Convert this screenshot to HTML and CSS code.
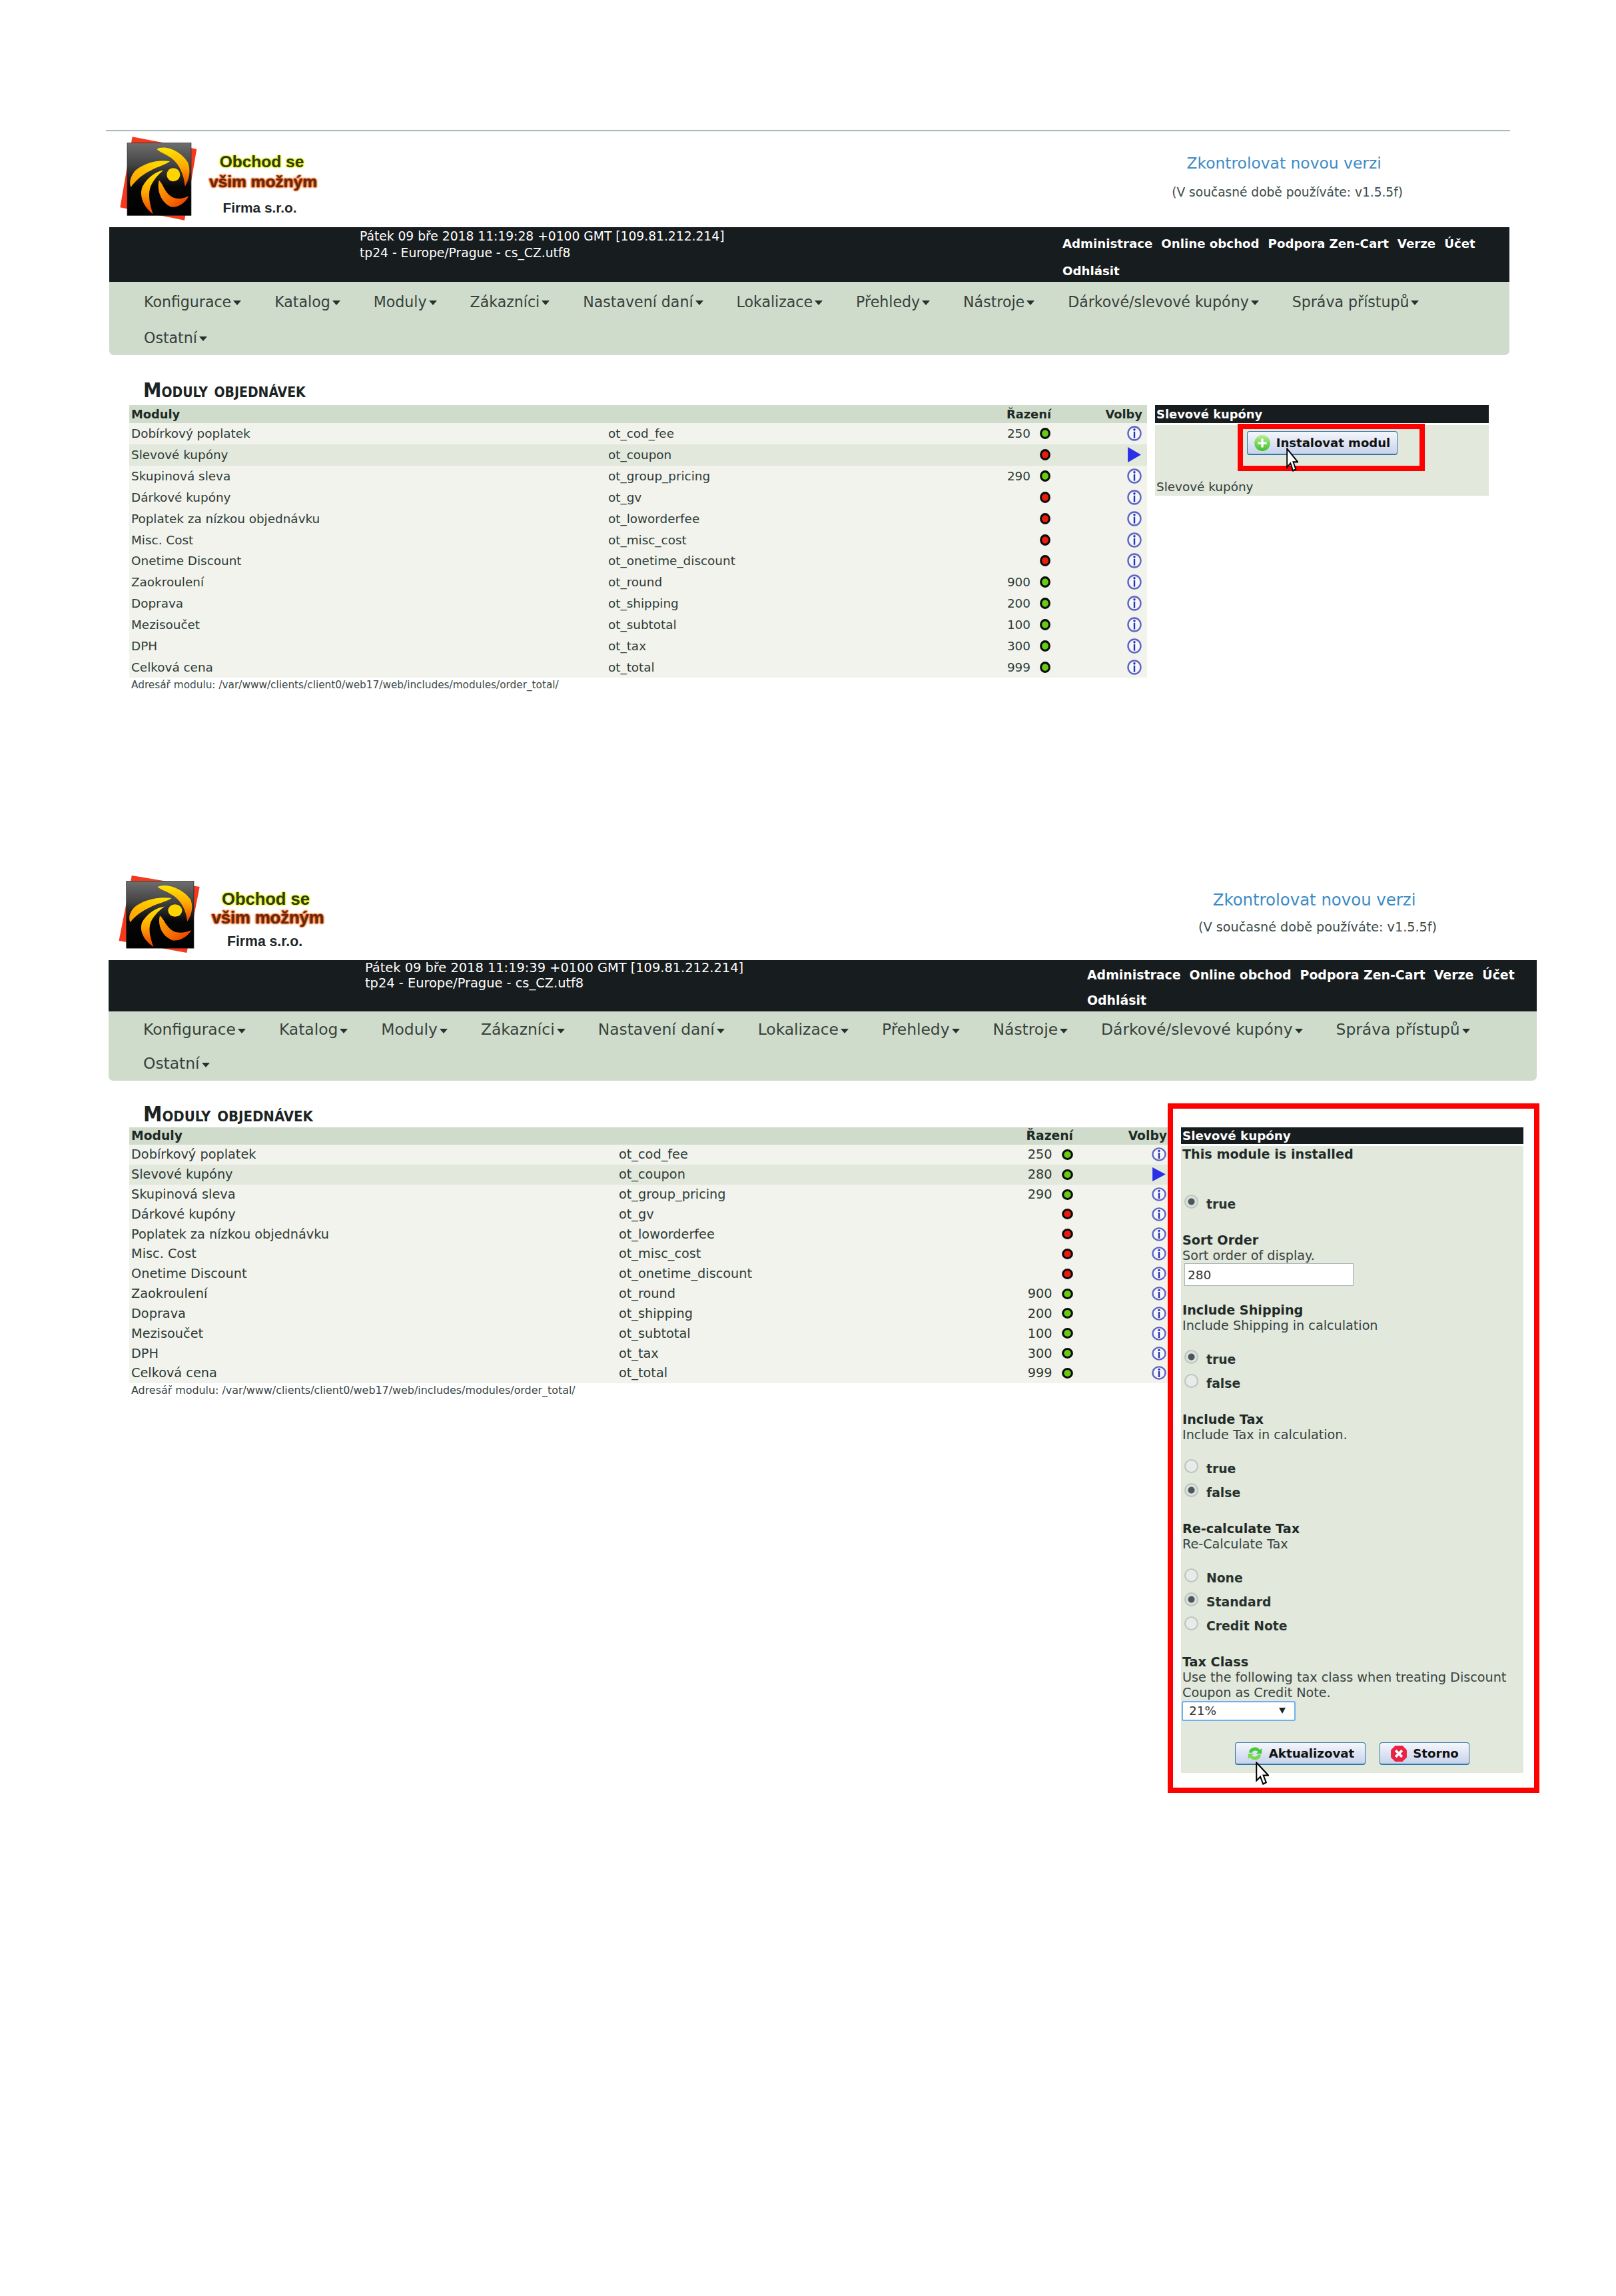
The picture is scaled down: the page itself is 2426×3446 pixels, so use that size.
FILE: index.html
```html
<!DOCTYPE html>
<html lang="cs">
<head>
<meta charset="utf-8">
<title>Moduly objednávek</title>
<link rel="stylesheet" href="styles.css">
</head>
<body>
<svg class="sprite" aria-hidden="true">
  <defs>
    <linearGradient id="gBlade" x1="0" y1="0" x2="0" y2="1"><stop offset="0" stop-color="#ffe600"/><stop offset=".5" stop-color="#ffa800"/><stop offset="1" stop-color="#ee3d00"/></linearGradient>
    <linearGradient id="gWing" x1="1" y1="0" x2="0" y2="1"><stop offset="0" stop-color="#ffe600"/><stop offset="1" stop-color="#ff9a00"/></linearGradient>
    <linearGradient id="gTail" x1="0" y1="0" x2="1" y2="1"><stop offset="0" stop-color="#ffb000"/><stop offset=".6" stop-color="#f56a00"/><stop offset="1" stop-color="#e83000"/></linearGradient>
    <linearGradient id="gBlock" x1="0" y1="0" x2="0" y2="1"><stop offset="0" stop-color="#6e6e6e"/><stop offset=".3" stop-color="#444"/><stop offset=".6" stop-color="#060606"/><stop offset="1" stop-color="#000"/></linearGradient>
    <linearGradient id="gGreen" x1="0" y1="0" x2="0" y2="1"><stop offset="0" stop-color="#b6ee90"/><stop offset="1" stop-color="#3fc12c"/></linearGradient>
    <symbol id="logo" viewBox="20 35 370 395" preserveAspectRatio="none">
      <polygon points="85,45 375,100 320,420 30,362" fill="#f4391c"/>
      <rect x="62" y="72" width="288" height="326" fill="url(#gBlock)" stroke="#222" stroke-width="2"/>
      <path d="M195 100C230 80 300 105 335 160C350 195 340 240 322 268C318 220 300 170 260 140C235 122 210 115 195 100Z" fill="url(#gBlade)"/>
      <path d="M255 155C200 145 130 165 95 200C75 225 70 250 78 272C100 240 130 215 170 195C200 180 235 170 255 155Z" fill="url(#gWing)"/>
      <path d="M225 195C190 200 150 230 130 270C115 310 135 360 178 392C165 350 155 310 165 275C175 245 200 215 225 195Z" fill="url(#gBlade)"/>
      <path d="M205 240C195 280 210 340 260 360C290 365 325 340 340 310C310 325 275 330 250 305C225 280 225 260 205 240Z" fill="url(#gTail)"/>
      <circle cx="270" cy="215" r="30" fill="#ffd400"/>
    </symbol>
    <symbol id="info" viewBox="0 0 22 22" preserveAspectRatio="none">
      <circle cx="11" cy="11" r="9.5" fill="#f6f8ff" stroke="#5f66c2" stroke-width="2.4"/>
      <circle cx="11" cy="5.6" r="1.7" fill="#2633a8"/>
      <rect x="9.8" y="8.4" width="2.4" height="9.4" fill="#2633a8"/>
    </symbol>
    <symbol id="play" viewBox="0 0 20 20" preserveAspectRatio="none">
      <polygon points="1,0 19,10 1,20" fill="#2a2fe8"/>
    </symbol>
    <symbol id="dot-on" viewBox="0 0 16 16" preserveAspectRatio="none">
      <circle cx="8" cy="8" r="6.4" fill="#66cc10" stroke="#0b0b0b" stroke-width="3"/>
    </symbol>
    <symbol id="dot-off" viewBox="0 0 16 16" preserveAspectRatio="none">
      <circle cx="8" cy="8" r="6.4" fill="#ee1a0a" stroke="#0b0b0b" stroke-width="3"/>
    </symbol>
    <symbol id="cursor" viewBox="0 0 24 38" preserveAspectRatio="none">
      <path d="M1.5 1.5V31L8.5 24.5L13.5 36.5L19 34L14 22.5H23Z" fill="#fff" stroke="#000" stroke-width="2.4" stroke-linejoin="miter"/>
    </symbol>
  </defs>
</svg>
<main class="page">

<section class="shot shot-a">
  <div class="rule"></div>
  <header class="brand">
    <svg class="logo"><use href="#logo"/></svg>
    <div class="wordmark">
      <div class="wm-yellow">Obchod se</div>
      <div class="wm-orange">všim možným</div>
      <div class="wm-firm">Firma s.r.o.</div>
    </div>
    <div class="version">
      <a class="version-link">Zkontrolovat novou verzi</a>
      <div class="version-now">(V současné době používáte: v1.5.5f)</div>
    </div>
  </header>
  <div class="topbar">
    <div class="stamp">Pátek 09 bře 2018 11:19:28 +0100 GMT [109.81.212.214]<br>tp24 - Europe/Prague - cs_CZ.utf8</div>
    <div class="toplinks"><a>Administrace</a><a>Online obchod</a><a>Podpora Zen-Cart</a><a>Verze</a><a>Účet</a><a>Odhlásit</a></div>
  </div>
  <nav class="menu">
    <a>Konfigurace</a><a>Katalog</a><a>Moduly</a><a>Zákazníci</a><a>Nastavení daní</a><a>Lokalizace</a><a>Přehledy</a><a>Nástroje</a><a>Dárkové/slevové kupóny</a><a>Správa přístupů</a><a>Ostatní</a>
  </nav>
  <div class="content">
    <div class="modules">
      <h1 class="title">Moduly objednávek</h1>
      <table class="grid">
        <thead><tr class="head"><th>Moduly</th><th></th><th class="sort">Řazení</th><th class="opt">Volby</th></tr></thead>
        <tbody>
          <tr><td>Dobírkový poplatek</td><td>ot_cod_fee</td><td class="sort">250<svg class="dot"><use href="#dot-on"/></svg></td><td class="opt"><svg class="info"><use href="#info"/></svg></td></tr>
          <tr class="selected"><td>Slevové kupóny</td><td>ot_coupon</td><td class="sort"><svg class="dot"><use href="#dot-off"/></svg></td><td class="opt"><svg class="info"><use href="#play"/></svg></td></tr>
          <tr><td>Skupinová sleva</td><td>ot_group_pricing</td><td class="sort">290<svg class="dot"><use href="#dot-on"/></svg></td><td class="opt"><svg class="info"><use href="#info"/></svg></td></tr>
          <tr><td>Dárkové kupóny</td><td>ot_gv</td><td class="sort"><svg class="dot"><use href="#dot-off"/></svg></td><td class="opt"><svg class="info"><use href="#info"/></svg></td></tr>
          <tr><td>Poplatek za nízkou objednávku</td><td>ot_loworderfee</td><td class="sort"><svg class="dot"><use href="#dot-off"/></svg></td><td class="opt"><svg class="info"><use href="#info"/></svg></td></tr>
          <tr><td>Misc. Cost</td><td>ot_misc_cost</td><td class="sort"><svg class="dot"><use href="#dot-off"/></svg></td><td class="opt"><svg class="info"><use href="#info"/></svg></td></tr>
          <tr><td>Onetime Discount</td><td>ot_onetime_discount</td><td class="sort"><svg class="dot"><use href="#dot-off"/></svg></td><td class="opt"><svg class="info"><use href="#info"/></svg></td></tr>
          <tr><td>Zaokroulení</td><td>ot_round</td><td class="sort">900<svg class="dot"><use href="#dot-on"/></svg></td><td class="opt"><svg class="info"><use href="#info"/></svg></td></tr>
          <tr><td>Doprava</td><td>ot_shipping</td><td class="sort">200<svg class="dot"><use href="#dot-on"/></svg></td><td class="opt"><svg class="info"><use href="#info"/></svg></td></tr>
          <tr><td>Mezisoučet</td><td>ot_subtotal</td><td class="sort">100<svg class="dot"><use href="#dot-on"/></svg></td><td class="opt"><svg class="info"><use href="#info"/></svg></td></tr>
          <tr><td>DPH</td><td>ot_tax</td><td class="sort">300<svg class="dot"><use href="#dot-on"/></svg></td><td class="opt"><svg class="info"><use href="#info"/></svg></td></tr>
          <tr><td>Celková cena</td><td>ot_total</td><td class="sort">999<svg class="dot"><use href="#dot-on"/></svg></td><td class="opt"><svg class="info"><use href="#info"/></svg></td></tr>
        </tbody>
      </table>
      <p class="path">Adresář modulu: /var/www/clients/client0/web17/web/includes/modules/order_total/</p>
    </div>
    <aside class="side">
      <div class="side-head">Slevové kupóny</div>
      <div class="side-body side-body-install">
        <div class="actions">
          <button class="btn btn-install" type="button">
            <svg class="btn-ic" viewBox="0 0 24 24"><circle cx="12" cy="12" r="11" fill="url(#gGreen)"/><path d="M12 6v12M6 12h12" stroke="#fff" stroke-width="3"/></svg>Instalovat modul
          </button>
        </div>
        <div class="side-note">Slevové kupóny</div>
      </div>
    </aside>
  </div>
  <div class="callout callout-a"></div>
  <svg class="pointer pointer-a"><use href="#cursor"/></svg>
</section>

<section class="shot shot-b">
  <header class="brand">
    <svg class="logo"><use href="#logo"/></svg>
    <div class="wordmark">
      <div class="wm-yellow">Obchod se</div>
      <div class="wm-orange">všim možným</div>
      <div class="wm-firm">Firma s.r.o.</div>
    </div>
    <div class="version">
      <a class="version-link">Zkontrolovat novou verzi</a>
      <div class="version-now">(V současné době používáte: v1.5.5f)</div>
    </div>
  </header>
  <div class="topbar">
    <div class="stamp">Pátek 09 bře 2018 11:19:39 +0100 GMT [109.81.212.214]<br>tp24 - Europe/Prague - cs_CZ.utf8</div>
    <div class="toplinks"><a>Administrace</a><a>Online obchod</a><a>Podpora Zen-Cart</a><a>Verze</a><a>Účet</a><a>Odhlásit</a></div>
  </div>
  <nav class="menu">
    <a>Konfigurace</a><a>Katalog</a><a>Moduly</a><a>Zákazníci</a><a>Nastavení daní</a><a>Lokalizace</a><a>Přehledy</a><a>Nástroje</a><a>Dárkové/slevové kupóny</a><a>Správa přístupů</a><a>Ostatní</a>
  </nav>
  <div class="content">
    <div class="modules">
      <h1 class="title">Moduly objednávek</h1>
      <table class="grid">
        <thead><tr class="head"><th>Moduly</th><th></th><th class="sort">Řazení</th><th class="opt">Volby</th></tr></thead>
        <tbody>
          <tr><td>Dobírkový poplatek</td><td>ot_cod_fee</td><td class="sort">250<svg class="dot"><use href="#dot-on"/></svg></td><td class="opt"><svg class="info"><use href="#info"/></svg></td></tr>
          <tr class="selected"><td>Slevové kupóny</td><td>ot_coupon</td><td class="sort">280<svg class="dot"><use href="#dot-on"/></svg></td><td class="opt"><svg class="info"><use href="#play"/></svg></td></tr>
          <tr><td>Skupinová sleva</td><td>ot_group_pricing</td><td class="sort">290<svg class="dot"><use href="#dot-on"/></svg></td><td class="opt"><svg class="info"><use href="#info"/></svg></td></tr>
          <tr><td>Dárkové kupóny</td><td>ot_gv</td><td class="sort"><svg class="dot"><use href="#dot-off"/></svg></td><td class="opt"><svg class="info"><use href="#info"/></svg></td></tr>
          <tr><td>Poplatek za nízkou objednávku</td><td>ot_loworderfee</td><td class="sort"><svg class="dot"><use href="#dot-off"/></svg></td><td class="opt"><svg class="info"><use href="#info"/></svg></td></tr>
          <tr><td>Misc. Cost</td><td>ot_misc_cost</td><td class="sort"><svg class="dot"><use href="#dot-off"/></svg></td><td class="opt"><svg class="info"><use href="#info"/></svg></td></tr>
          <tr><td>Onetime Discount</td><td>ot_onetime_discount</td><td class="sort"><svg class="dot"><use href="#dot-off"/></svg></td><td class="opt"><svg class="info"><use href="#info"/></svg></td></tr>
          <tr><td>Zaokroulení</td><td>ot_round</td><td class="sort">900<svg class="dot"><use href="#dot-on"/></svg></td><td class="opt"><svg class="info"><use href="#info"/></svg></td></tr>
          <tr><td>Doprava</td><td>ot_shipping</td><td class="sort">200<svg class="dot"><use href="#dot-on"/></svg></td><td class="opt"><svg class="info"><use href="#info"/></svg></td></tr>
          <tr><td>Mezisoučet</td><td>ot_subtotal</td><td class="sort">100<svg class="dot"><use href="#dot-on"/></svg></td><td class="opt"><svg class="info"><use href="#info"/></svg></td></tr>
          <tr><td>DPH</td><td>ot_tax</td><td class="sort">300<svg class="dot"><use href="#dot-on"/></svg></td><td class="opt"><svg class="info"><use href="#info"/></svg></td></tr>
          <tr><td>Celková cena</td><td>ot_total</td><td class="sort">999<svg class="dot"><use href="#dot-on"/></svg></td><td class="opt"><svg class="info"><use href="#info"/></svg></td></tr>
        </tbody>
      </table>
      <p class="path">Adresář modulu: /var/www/clients/client0/web17/web/includes/modules/order_total/</p>
    </div>
    <aside class="side">
      <div class="side-head">Slevové kupóny</div>
      <form class="side-body side-form">
        <div class="state">This module is installed</div>
        <div class="options options-first">
          <label class="opt-row"><input type="radio" name="status" checked>true</label>
        </div>
        <div class="group">
          <div class="g-title">Sort Order</div>
          <div class="g-desc">Sort order of display.</div>
          <input class="field" type="text" value="280">
        </div>
        <div class="group">
          <div class="g-title">Include Shipping</div>
          <div class="g-desc">Include Shipping in calculation</div>
          <div class="options">
            <label class="opt-row"><input type="radio" name="ship" checked>true</label>
            <label class="opt-row"><input type="radio" name="ship">false</label>
          </div>
        </div>
        <div class="group">
          <div class="g-title">Include Tax</div>
          <div class="g-desc">Include Tax in calculation.</div>
          <div class="options">
            <label class="opt-row"><input type="radio" name="tax">true</label>
            <label class="opt-row"><input type="radio" name="tax" checked>false</label>
          </div>
        </div>
        <div class="group">
          <div class="g-title">Re-calculate Tax</div>
          <div class="g-desc">Re-Calculate Tax</div>
          <div class="options">
            <label class="opt-row"><input type="radio" name="recalc">None</label>
            <label class="opt-row"><input type="radio" name="recalc" checked>Standard</label>
            <label class="opt-row"><input type="radio" name="recalc">Credit Note</label>
          </div>
        </div>
        <div class="group">
          <div class="g-title">Tax Class</div>
          <div class="g-desc">Use the following tax class when treating Discount Coupon as Credit Note.</div>
          <div class="select-wrap"><select class="select"><option>21%</option></select></div>
        </div>
        <div class="form-actions">
          <button class="btn btn-update" type="button">
            <svg class="btn-ic" viewBox="0 0 28 28"><path d="M4 12A10 10 0 0 1 22 8L25 5V14H16L19 11A6 6 0 0 0 9 13Z" fill="#46c83c"/><path d="M24 16A10 10 0 0 1 6 20L3 23V14H12L9 17A6 6 0 0 0 19 15Z" fill="#7ad84e"/></svg>Aktualizovat
          </button>
          <button class="btn btn-cancel" type="button">
            <svg class="btn-ic" viewBox="0 0 24 24"><polygon points="7,1 17,1 23,7 23,17 17,23 7,23 1,17 1,7" fill="#ea2244"/><path d="M7.5 7.5l9 9M16.5 7.5l-9 9" stroke="#fff" stroke-width="3.4"/></svg>Storno
          </button>
        </div>
      </form>
    </aside>
  </div>
  <div class="callout callout-b"></div>
  <svg class="pointer pointer-b"><use href="#cursor"/></svg>
</section>

</main>
</body>
</html>
```

FILE: styles.css
```css
* { box-sizing: border-box; }
html, body { margin: 0; padding: 0; background: #fff; }
body { font-family: "DejaVu Sans", sans-serif; color: #2f3b37; }
.sprite { position: absolute; width: 0; height: 0; }
.page { height: 3446px; padding-top: 195px; overflow: hidden; }

.shot { position: relative; }
.shot-a {
  width: 2102px; margin-left: 164px;
  --brand-h: 144px; --logo-w: 123.3px; --logo-h: 132px; --logo-l: 12.7px; --logo-t: 4.7px;
  --wm-gap: 5px; --wm-top: 31px; --wm-lh: 30px; --wm-firm-gap: 9px; --wm-y-pr: 4px; --wm-f-pr: 10px;
  --wm1: 24.5px; --wm2: 24.5px; --wm3: 20.8px;
  --ver-top: 26px; --ver-lh: 44px; --ver-pr: 160px; --ver1: 23.4px; --ver2: 18.6px;
  --bar-h: 82px; --stamp-pl: 376px; --stamp-pt: .5px; --stamp-lh: 25px; --stamp-fs: 18.7px;
  --links-w: 671px; --links-pt: 3.5px; --links-lh: 41px; --links-gap: 13px; --links-fs: 18.2px;
  --menu-h: 110px; --menu-pt: 3px; --menu-lh: 54px; --menu-fs: 22.1px;
  --content-pl: 30px; --title-h: 75px; --title-pl: 21px; --title-pt: 33px; --title-fs: 30.6px;
  --table-w: 1528px; --cols: 719px 577px 88px 144px; --head-h: 27px; --row-h: 31.83px; --row-fs: 18.4px;
  --dot-w: 16px; --dot-h: 17px; --dot-gap: 14px; --dot-pr: 1px; --info-w: 22px; --info-h: 23px; --opt-pr: 8px; --head-opt-pr: 7px;
  --path-fs: 15.3px; --path-lh: 23px;
  --side-w: 501px; --side-gap: 12px; --side-head: 27px; --side-fs: 17.9px; --note-fs: 18.4px;
}
.shot-b {
  width: 2144px; margin-left: 163px; margin-top: 265px;
  --brand-h: 136px; --logo-w: 130px; --logo-h: 122px; --logo-l: 12px; --logo-t: 5.6px;
  --wm-gap: 7px; --wm-top: 30px; --wm-lh: 28px; --wm-firm-gap: 8px; --wm-y-pr: 6px; --wm-f-pr: 9px;
  --wm1: 25.5px; --wm2: 25.5px; --wm3: 21.2px;
  --ver-top: 25.5px; --ver-lh: 41px; --ver-pr: 150px; --ver1: 24.4px; --ver2: 19.2px;
  --bar-h: 77px; --stamp-pl: 385px; --stamp-pt: .5px; --stamp-lh: 23px; --stamp-fs: 19.4px;
  --links-w: 675px; --links-pt: 3px; --links-lh: 38px; --links-gap: 13px; --links-fs: 18.9px;
  --menu-h: 104px; --menu-pt: 2.5px; --menu-lh: 51px; --menu-fs: 23.4px;
  --content-pl: 31px; --title-h: 70px; --title-pl: 21px; --title-pt: 30px; --title-fs: 31.7px;
  --table-w: 1559px; --cols: 735px 571px 111px 142px; --head-h: 26px; --row-h: 29.83px; --row-fs: 19.3px;
  --dot-w: 17px; --dot-h: 16px; --dot-gap: 14px; --dot-pr: .5px; --info-w: 22px; --info-h: 21px; --opt-pr: 2px; --head-opt-pr: 1px;
  --path-fs: 15.9px; --path-lh: 22px;
  --side-w: 513.5px; --side-gap: 20px; --side-head: 25px; --side-fs: 18.3px; --note-fs: 18.3px;
}

.rule { height: 2px; margin: 0 -1px 0 -5px; background: #a9b7b6; }

.brand { display: flex; align-items: flex-start; height: var(--brand-h); }
.logo { flex: none; width: var(--logo-w); height: var(--logo-h); margin: var(--logo-t) 0 0 var(--logo-l); }
.wordmark {
  flex: none; width: 180px; margin: var(--wm-top) 0 0 var(--wm-gap);
  font-family: "Liberation Sans", sans-serif; font-weight: 700; text-align: center; line-height: var(--wm-lh);
}
.wm-yellow { padding-right: var(--wm-y-pr); font-size: var(--wm1); color: #2c3a22; text-shadow: 0 0 2px #e8ee00, 0 0 3px #e8ee00, 1px 0 2px #e8ee00, -1px 0 2px #e8ee00; }
.wm-orange { font-size: var(--wm2); color: #5e2a1a; text-shadow: 0 0 2px #f25a00, 0 0 3px #f25a00, 1px 0 2px #f25a00, -1px 0 2px #f25a00; }
.wm-firm { padding-right: var(--wm-f-pr); font-size: var(--wm3); color: #20262a; margin-top: var(--wm-firm-gap); }
.version { margin: var(--ver-top) var(--ver-pr) 0 auto; text-align: center; line-height: var(--ver-lh); }
.version-link { display: block; padding-right: 10px; font-size: var(--ver1); color: #3c8bc6; }
.version-now { font-size: var(--ver2); color: #3c4a48; }

.topbar { display: flex; height: var(--bar-h); background: #171c1e; color: #fff; }
.stamp { padding: var(--stamp-pt) 0 0 var(--stamp-pl); font-size: var(--stamp-fs); line-height: var(--stamp-lh); }
.toplinks {
  display: flex; flex-wrap: wrap; align-content: flex-start; column-gap: var(--links-gap);
  width: var(--links-w); margin-left: auto; padding-top: var(--links-pt);
  font-size: var(--links-fs); font-weight: 700; line-height: var(--links-lh);
}

.menu {
  display: flex; flex-wrap: wrap; align-content: flex-start; column-gap: 50px;
  height: var(--menu-h); padding: var(--menu-pt) 40px 0 52px;
  background: #d0dccb; border-radius: 0 0 7px 7px;
  font-size: var(--menu-fs); line-height: var(--menu-lh); color: #36423d;
}
.menu a { display: flex; align-items: center; column-gap: 3px; }
.menu a::after {
  content: ""; width: 0; height: 0; margin-top: 3px;
  border-left: 6px solid transparent; border-right: 6px solid transparent; border-top: 7px solid #26302c;
}

.content { display: flex; align-items: flex-start; padding-left: var(--content-pl); }
.modules { flex: none; width: var(--table-w); }
.title {
  height: var(--title-h); margin: 0; padding: var(--title-pt) 0 0 var(--title-pl);
  font-family: "DejaVu Sans Condensed", "DejaVu Sans", sans-serif;
  font-size: var(--title-fs); font-weight: 700; font-variant: small-caps; line-height: 40px; color: #1b2422;
}
.grid, .grid thead, .grid tbody { display: block; }
.grid { width: 100%; border-collapse: collapse; background: #f1f3ec; }
.grid tr { display: grid; grid-template-columns: var(--cols); height: var(--row-h); align-items: center; font-size: var(--row-fs); }
.grid tr.head { height: var(--head-h); background: #d0dccb; }
.grid tr.selected { background: #e2e8dc; }
.grid th, .grid td { padding: 0; font-weight: 400; }
.grid th { font-size: .97em; font-weight: 700; color: #1f2a27; text-align: left; }
.grid th:first-child, .grid td:first-child { padding-left: 3px; }
.grid .sort { display: flex; justify-content: flex-end; align-items: center; }
.grid th.sort { text-align: right; }
.grid td.sort { padding-right: var(--dot-pr); }
.grid td.opt { display: flex; justify-content: flex-end; padding-right: var(--opt-pr); }
.grid th.opt { text-align: right; padding-right: var(--head-opt-pr); }
.dot { flex: none; width: var(--dot-w); height: var(--dot-h); margin-left: var(--dot-gap); }
.info { flex: none; width: var(--info-w); height: var(--info-h); }
.path { margin: 0; padding-left: 3px; font-size: var(--path-fs); line-height: var(--path-lh); color: #3a4743; }

.side { flex: none; width: var(--side-w); margin: var(--title-h) 0 0 var(--side-gap); font-size: var(--side-fs); }
.side-head { height: var(--side-head); padding-left: 2px; background: #171c1e; color: #fff; font-weight: 700; line-height: var(--side-head); }
.side-body { margin-top: 3px; background: #e2e8dc; }
.side-body-install { height: 106px; padding-top: 9px; }
.actions { display: flex; justify-content: center; height: 36px; }
.side-note { margin-top: 35px; padding-left: 2px; font-size: var(--note-fs); line-height: 26px; }

.btn {
  display: inline-flex; align-items: center; justify-content: center; column-gap: 8px; padding: 0;
  border: 1px solid #2f78a8; border-bottom-width: 2px; border-radius: 4px;
  background: linear-gradient(#f4f6fc, #c8d3ec);
  font-family: inherit; font-weight: 700; color: #111;
}
.btn-ic { flex: none; width: 26px; height: 26px; }
.btn-install { width: 226px; height: 36px; font-size: 18px; }

.side-form { padding: 1.5px 0 12px 2px; font-size: 19.2px; line-height: 23px; }
.state, .g-title { font-weight: 700; color: #1f2a27; }
.g-desc { color: #37433f; max-width: 500px; }
.group { margin-top: 25px; }
.options { margin-top: 21px; }
.options-first { margin-top: 45px; }
.opt-row { display: flex; align-items: center; height: 36px; font-size: 18.8px; font-weight: 700; color: #27322f; }
.opt-row input {
  flex: none; appearance: none; width: 21px; height: 21px; margin: -8px 12px 0 3px; border-radius: 50%;
  border: 2px solid #bcc5c1; background: #e8ebe7;
}
.opt-row input:checked { background: radial-gradient(circle, #4c5757 0 4.5px, #dde1dd 5.5px); }
.field {
  display: block; width: 254px; height: 34px; margin: 0 0 0 3px; padding: 0 4px;
  border: 1px solid #a6b4b4; background: #fff; font: 400 18.5px "DejaVu Sans", sans-serif; color: #333;
}
.select-wrap { position: relative; width: 171px; height: 30px; margin: .5px 0 0 -1px; }
.select {
  appearance: none; width: 100%; height: 100%; padding: 0 0 0 9px; border: 2px solid #6fb0ee; border-radius: 3px;
  background: #fff; font: 400 18.5px "DejaVu Sans", sans-serif; color: #333;
}
.select-wrap::after {
  content: ""; position: absolute; right: 15px; top: 10px; width: 0; height: 0;
  border-left: 5px solid transparent; border-right: 5px solid transparent; border-top: 9px solid #1d2528;
}
.form-actions { display: flex; column-gap: 21px; margin: 32.5px 0 0 79px; }
.form-actions .btn { height: 33.5px; font-size: 18.2px; }
.btn-update { width: 196px; }
.btn-cancel { width: 135px; }

.callout { position: absolute; border: 8px solid #fe0000; }
.callout-a { left: 1694px; top: 441px; width: 281px; height: 71px; }
.callout-b { left: 1590px; top: 351px; width: 558px; height: 1035px; }
.pointer { position: absolute; }
.pointer-a { left: 1767px; top: 477px; width: 18px; height: 36px; }
.pointer-b { left: 1722px; top: 1339px; width: 20px; height: 35px; }
```
